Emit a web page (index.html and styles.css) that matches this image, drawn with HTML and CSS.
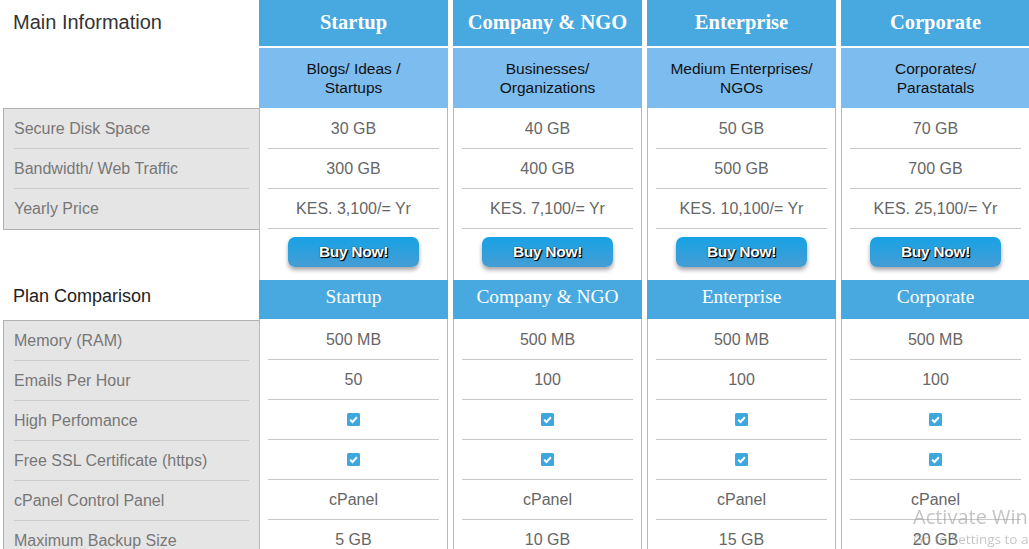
FILE: index.html
```html
<!DOCTYPE html>
<html lang="en">
<head>
    <meta charset="UTF-8">
    <meta name="viewport" content="width=device-width, initial-scale=1.0">
    <title>Hosting Plans</title>
    <link rel="stylesheet" href="styles.css">
</head>
<body>

<div class="pricing">

    <!-- Labels column -->
    <div class="labels">
        <div class="labels-title main-title">Main Information</div>
        <div class="label-box">
            <div class="label-row">Secure Disk Space</div>
            <div class="label-row">Bandwidth/ Web Traffic</div>
            <div class="label-row">Yearly Price</div>
        </div>
        <div class="labels-title plan-title">Plan Comparison</div>
        <div class="label-box">
            <div class="label-row">Memory (RAM)</div>
            <div class="label-row">Emails Per Hour</div>
            <div class="label-row">High Perfomance</div>
            <div class="label-row">Free SSL Certificate (https)</div>
            <div class="label-row">cPanel Control Panel</div>
            <div class="label-row">Maximum Backup Size</div>
            <div class="label-row">Daily Backups</div>
        </div>
    </div>

    <!-- Startup -->
    <div class="plan">
        <div class="plan-name">Startup</div>
        <div class="plan-desc">Blogs/ Ideas /<br>Startups</div>
        <div class="plan-body">
            <div class="cell">30 GB</div>
            <div class="cell">300 GB</div>
            <div class="cell">KES. 3,100/= Yr</div>
            <div class="buy-row"><button class="buy">Buy Now!</button></div>
        </div>
        <div class="plan-name small">Startup</div>
        <div class="plan-body second">
            <div class="cell">500 MB</div>
            <div class="cell">50</div>
            <div class="cell"><svg class="check" viewBox="0 0 13 13"><rect width="13" height="13" rx="1.5"/><path d="M3.2 6.8 5.5 9 9.9 4.2"/></svg></div>
            <div class="cell"><svg class="check" viewBox="0 0 13 13"><rect width="13" height="13" rx="1.5"/><path d="M3.2 6.8 5.5 9 9.9 4.2"/></svg></div>
            <div class="cell">cPanel</div>
            <div class="cell">5 GB</div>
            <div class="cell">Yes</div>
        </div>
    </div>

    <!-- Company & NGO -->
    <div class="plan">
        <div class="plan-name">Company &amp; NGO</div>
        <div class="plan-desc">Businesses/<br>Organizations</div>
        <div class="plan-body">
            <div class="cell">40 GB</div>
            <div class="cell">400 GB</div>
            <div class="cell">KES. 7,100/= Yr</div>
            <div class="buy-row"><button class="buy">Buy Now!</button></div>
        </div>
        <div class="plan-name small">Company &amp; NGO</div>
        <div class="plan-body second">
            <div class="cell">500 MB</div>
            <div class="cell">100</div>
            <div class="cell"><svg class="check" viewBox="0 0 13 13"><rect width="13" height="13" rx="1.5"/><path d="M3.2 6.8 5.5 9 9.9 4.2"/></svg></div>
            <div class="cell"><svg class="check" viewBox="0 0 13 13"><rect width="13" height="13" rx="1.5"/><path d="M3.2 6.8 5.5 9 9.9 4.2"/></svg></div>
            <div class="cell">cPanel</div>
            <div class="cell">10 GB</div>
            <div class="cell">Yes</div>
        </div>
    </div>

    <!-- Enterprise -->
    <div class="plan">
        <div class="plan-name">Enterprise</div>
        <div class="plan-desc">Medium Enterprises/<br>NGOs</div>
        <div class="plan-body">
            <div class="cell">50 GB</div>
            <div class="cell">500 GB</div>
            <div class="cell">KES. 10,100/= Yr</div>
            <div class="buy-row"><button class="buy">Buy Now!</button></div>
        </div>
        <div class="plan-name small">Enterprise</div>
        <div class="plan-body second">
            <div class="cell">500 MB</div>
            <div class="cell">100</div>
            <div class="cell"><svg class="check" viewBox="0 0 13 13"><rect width="13" height="13" rx="1.5"/><path d="M3.2 6.8 5.5 9 9.9 4.2"/></svg></div>
            <div class="cell"><svg class="check" viewBox="0 0 13 13"><rect width="13" height="13" rx="1.5"/><path d="M3.2 6.8 5.5 9 9.9 4.2"/></svg></div>
            <div class="cell">cPanel</div>
            <div class="cell">15 GB</div>
            <div class="cell">Yes</div>
        </div>
    </div>

    <!-- Corporate -->
    <div class="plan">
        <div class="plan-name">Corporate</div>
        <div class="plan-desc">Corporates/<br>Parastatals</div>
        <div class="plan-body">
            <div class="cell">70 GB</div>
            <div class="cell">700 GB</div>
            <div class="cell">KES. 25,100/= Yr</div>
            <div class="buy-row"><button class="buy">Buy Now!</button></div>
        </div>
        <div class="plan-name small">Corporate</div>
        <div class="plan-body second">
            <div class="cell">500 MB</div>
            <div class="cell">100</div>
            <div class="cell"><svg class="check" viewBox="0 0 13 13"><rect width="13" height="13" rx="1.5"/><path d="M3.2 6.8 5.5 9 9.9 4.2"/></svg></div>
            <div class="cell"><svg class="check" viewBox="0 0 13 13"><rect width="13" height="13" rx="1.5"/><path d="M3.2 6.8 5.5 9 9.9 4.2"/></svg></div>
            <div class="cell">cPanel</div>
            <div class="cell">20 GB</div>
            <div class="cell">Yes</div>
        </div>
    </div>

</div>

<!-- OS watermark -->
<div class="activate">
    <div class="activate-title">Activate Windows</div>
    <div class="activate-sub">Go to Settings to activate Windows.</div>
</div>

</body>
</html>
```

FILE: styles.css
```css
html, body {
    margin: 0;
    height: 100%;
    overflow: hidden;
}

body {
    font-family: "Liberation Sans", Arial, sans-serif;
    background-color: #fff;
    color: #666;
}

.pricing {
    display: flex;
    padding-left: 3px;
}

/* Labels column */
.labels {
    width: 256px;
    flex: none;
}

.labels-title {
    padding-left: 10px;
}

.main-title {
    height: 108px;
    line-height: 44px;
    font-size: 20px;
    color: #333;
}

.plan-title {
    height: 40px;
    padding-top: 50px;
    line-height: 32px;
    font-size: 18px;
    color: #222;
}

.label-box {
    background-color: #e6e5e5;
    border: 1px solid #b0b0b0;
    border-right: none;
}

.label-row {
    height: 40px;
    line-height: 39px;
    margin: 0 10px;
    font-size: 16px;
    color: #777;
    border-bottom: 1px solid #cbcbcb;
    box-sizing: border-box;
}

.label-row:last-child {
    border-bottom: none;
}

/* Plan columns */
.plan {
    width: 189px;
    flex: none;
    margin-right: 5px;
}

.plan-name {
    height: 46px;
    line-height: 44px;
    background-color: #47a9df;
    color: #fff;
    text-align: center;
    font-family: "Liberation Serif", "Times New Roman", serif;
    font-weight: bold;
    font-size: 20.5px;
    margin-bottom: 2px;
}

.plan-name.small {
    height: 39px;
    line-height: 33px;
    margin-bottom: 0;
    font-weight: normal;
    font-size: 19.4px;
}

.plan-desc {
    height: 60px;
    background-color: #7dbcef;
    color: #111;
    font-size: 15.5px;
    line-height: 19px;
    text-align: center;
    display: flex;
    align-items: center;
    justify-content: center;
}

.plan-body {
    border-left: 1px solid #b7b7c6;
    border-right: 1px solid #b7b7c6;
    padding-top: 1px;
}

.cell {
    height: 40px;
    margin: 0 8px;
    border-bottom: 1px solid #c9c9c9;
    box-sizing: border-box;
    display: flex;
    align-items: center;
    justify-content: center;
    font-size: 16px;
    color: #666;
}

.plan-body.second .cell:last-child {
    border-bottom: none;
}

.buy-row {
    height: 51px;
    padding-top: 8px;
    box-sizing: border-box;
    text-align: center;
}

.buy {
    width: 131px;
    height: 30px;
    border: none;
    border-radius: 7px;
    background: linear-gradient(#17a2e5, #459dd4);
    box-shadow: 0 3px 4px rgba(0,0,0,.35);
    color: #fff;
    font-family: "Liberation Sans", Arial, sans-serif;
    font-weight: bold;
    font-size: 15.5px;
    letter-spacing: -0.3px;
    text-shadow: 1px 1px 1px #000, 0 0 1px #000, 1px 1px 0 #000;
    padding: 0;
}

.check {
    width: 13px;
    height: 13px;
    display: block;
}

.check rect {
    fill: #3ea7de;
}

.check path {
    fill: none;
    stroke: #fff;
    stroke-width: 2;
}

/* Windows watermark */
.activate {
    position: fixed;
    left: 913px;
    top: 504px;
    white-space: nowrap;
    font-family: "Open Sans", "Noto Sans", sans-serif;
    color: rgba(150,150,150,.55);
}

.activate-title {
    font-size: 20px;
    line-height: 26px;
}

.activate-sub {
    font-size: 13.5px;
    line-height: 18px;
}
```
